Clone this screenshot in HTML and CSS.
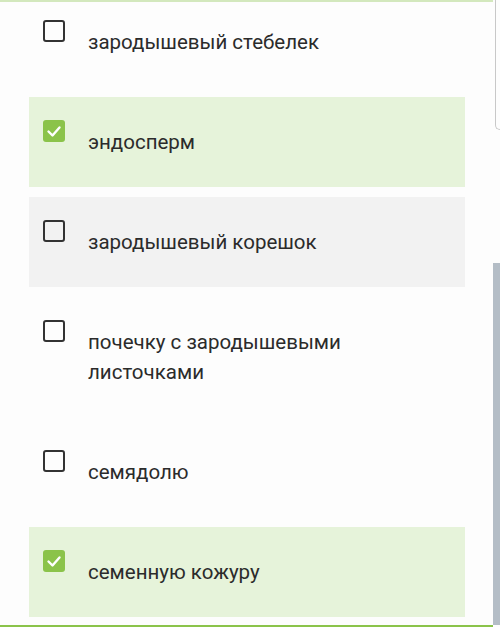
FILE: index.html
```html
<!DOCTYPE html>
<html lang="ru">
<head>
    <meta charset="UTF-8">
    <meta name="viewport" content="width=device-width, initial-scale=1.0">
    <title>Тест</title>
    <link rel="stylesheet" href="styles.css">
</head>
<body>
    <div class="page">
        <div class="question">
            <!-- Варианты ответа -->
            <ul class="options">
                <li class="option">
                    <span class="box"></span>
                    <span class="label">зародышевый стебелек</span>
                </li>
                <li class="option checked">
                    <span class="box">
                        <svg viewBox="0 0 22 22" width="22" height="22"><path d="M5.5 11.5l4 4 7-8" fill="none" stroke="#fff" stroke-width="2.4" stroke-linecap="round" stroke-linejoin="round"/></svg>
                    </span>
                    <span class="label">эндосперм</span>
                </li>
                <li class="option hover">
                    <span class="box"></span>
                    <span class="label">зародышевый корешок</span>
                </li>
                <li class="option">
                    <span class="box"></span>
                    <span class="label">почечку с зародышевыми<br>листочками</span>
                </li>
                <li class="option">
                    <span class="box"></span>
                    <span class="label">семядолю</span>
                </li>
                <li class="option checked">
                    <span class="box">
                        <svg viewBox="0 0 22 22" width="22" height="22"><path d="M5.5 11.5l4 4 7-8" fill="none" stroke="#fff" stroke-width="2.4" stroke-linecap="round" stroke-linejoin="round"/></svg>
                    </span>
                    <span class="label">семенную кожуру</span>
                </li>
            </ul>
        </div>

        <!-- Правый край: панель и полоса прокрутки -->
        <div class="side">
            <div class="panel-edge"></div>
            <div class="scroll-thumb"></div>
        </div>
    </div>
</body>
</html>
```

FILE: styles.css
```css
/* Общие стили */
body {
    margin: 0;
    font-family: Roboto, "Noto Sans", Arial, sans-serif;
    background-color: #fdfdfd;
    color: #2b2b2b;
}

.page {
    display: flex;
    width: 500px;
    height: 627px;
    overflow: hidden;
}

.question {
    width: 493px;
    height: 627px;
    box-sizing: border-box;
    border-top: 2px solid #d3e8bd;
    border-bottom: 2px solid #8bc34a;
    overflow: hidden;
}

/* Список вариантов */
.options {
    list-style: none;
    margin: -5px 0 0 0;
    padding: 0 28px 0 29px;
    display: flex;
    flex-direction: column;
    gap: 10px;
}

.option {
    display: flex;
    align-items: flex-start;
    padding: 23px 14px 30px 14px;
    font-size: 20.5px;
    line-height: 30px;
}

.option.checked {
    background-color: #e6f3da;
}

.option.hover {
    background-color: #f2f2f2;
}

.box {
    flex: none;
    width: 22px;
    height: 22px;
    box-sizing: border-box;
    border: 2.5px solid #333;
    border-radius: 3px;
    margin-right: 23px;
}

.checked .box {
    border: none;
    background-color: #8bc34a;
}

.box svg {
    display: block;
}

.label {
    margin-top: 7px;
}

/* Правый край */
.side {
    width: 7px;
    display: flex;
    flex-direction: column;
}

.panel-edge {
    height: 129px;
    margin-left: 2px;
    border-left: 1px solid #c8c8c8;
    border-bottom: 1px solid #c8c8c8;
    border-bottom-left-radius: 5px;
}

.scroll-thumb {
    height: 362px;
    margin-top: 133px;
    background-color: #b4bdc6;
}
```
